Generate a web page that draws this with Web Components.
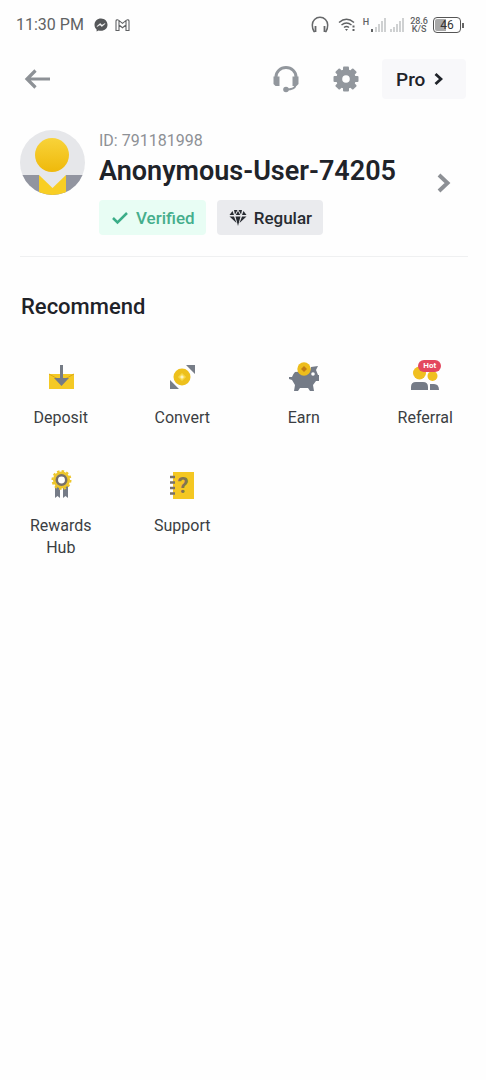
<!DOCTYPE html>
<html lang="en">
<head>
<meta charset="utf-8">
<meta name="viewport" content="width=device-width, initial-scale=1">
<title>Account</title>
<style>
body { margin: 0; min-height: 100vh; background: #fefefe; color: #1f2329; font-family: Roboto, "Liberation Sans", sans-serif; }
</style>
</head>
<body>
<account-page></account-page>
<script>
const define = (name, html) => customElements.define(name, class extends HTMLElement {
  constructor() {
    super();
    const t = document.createElement('template');
    t.innerHTML = html;
    this.attachShadow({ mode: 'open' }).append(t.content.cloneNode(true));
  }
});

define('status-bar', `
<style>
:host { display: flex; align-items: center; height: 50px; padding: 0 22px 0 16px; color: #606264; }
.time { font-size: 16px; line-height: 20px; margin-right: 10px; }
.apps { display: flex; align-items: center; gap: 7px; }
.system { display: flex; align-items: center; margin-left: auto; }
.phones { margin-right: 9px; }
.wifi { margin-right: 7px; }
.net { font-size: 9px; line-height: 12px; align-self: flex-start; font-weight: 500; }
.rate { font-size: 9px; line-height: 8px; text-align: center; font-weight: 500; margin: 0 5px 0 6px; }
.battery { box-sizing: border-box; width: 28px; height: 16px; border: 1px solid #555; border-radius: 4px; padding: 1px; font-size: 12px; line-height: 12px; text-align: center; color: #333; background: linear-gradient(90deg, #a9a9a9 44%, transparent 44%) content-box; }
.tip { width: 2px; height: 5px; background: #666; margin-left: 1px; }
.cell { display: flex; align-items: center; height: 18px; }
svg { display: block; }
</style>
<span class="time">11:30 PM</span>
<span class="apps">
<svg width="14" height="14" viewBox="0 0 14 14"><path d="M7 .5C3.200.5.5 3.200.5 6.700c0 2 .8 3.600 2.100 4.700v2.100l2-1c.8.2 1.500.3 2.400.3 3.800 0 6.500-2.700 6.500-6.100S10.800.5 7 .5z" fill="#555759"/><path d="M3 8.500l3-3 2 1.800 3-1.800-3 3-2-1.700z" fill="#fff" stroke="#fff" stroke-width=".6"/></svg>
<svg width="15" height="13" viewBox="0 0 15 13" fill="none" stroke="#606264" stroke-width="1.100"><path d="M1 11.500V2C1 .8 2.700.5 3.500 1.200l4 3.200 4-3.200C12.300.5 14 .8 14 2v9.500h-3V6L7.500 8.800 4 6v5.500zM4 6V2M11 6V2"/></svg>
</span>
<span class="system">
<svg class="phones" width="18" height="18" viewBox="0 0 18 18" fill="none" stroke="#66686a"><path d="M4 15.500H3C1.800 13.500 1.300 11 1.300 9a7.700 7.700 0 0 1 15.400 0c0 2-.5 4.500-1.700 6.500h-1" stroke-width="1.500"/><path d="M4.500 10v6M13.500 10v6" stroke-width="1.800"/></svg>
<svg class="wifi" width="18" height="14" viewBox="0 0 18 14" fill="none" stroke="#606264" stroke-width="1.500"><path d="M1 4.500Q8.500-2 16 4.500M3.500 7q5-4 10 0M6 9.500q2.500-2 5 0"/><path d="M7 11h3l-1.500 2z" fill="#606264" stroke="none"/><path d="M15.500 7.500v2M15.500 11v2" stroke-width="2"/></svg>
<span class="cell"><span class="net">H</span>
<svg width="18" height="16" viewBox="0 0 18 16" fill="#cfd1d2"><path d="M6 10h2v5H6zM9 7h2v8H9zM12 4h2v11h-2zM15 1h2v14h-2z"/><path d="M2 12h2v3H2z" fill="#606264"/></svg>
<svg width="17" height="16" viewBox="0 0 17 16" fill="#cfd1d2"><path d="M3 12h2v3H3zM6 10h2v5H6zM9 7h2v8H9zM12 4h2v11h-2zM15 1h2v14h-2z"/></svg></span>
<span class="rate">28.6<br>K/S</span>
<span class="battery">46</span><span class="tip"></span>
</span>`);

define('top-bar', `
<style>
:host { display: flex; align-items: center; height: 40px; padding: 9px 20px 0; }
button { border: 0; padding: 0; background: none; font: inherit; color: inherit; display: flex; align-items: center; }
svg { display: block; }
.back { padding-left: 4px; margin-right: auto; }
.help { margin-right: 33px; }
.gear { margin-right: 23px; }
.pro { box-sizing: border-box; height: 40px; width: 84px; padding-left: 14px; gap: 9px; background: #f8f8fa; border-radius: 4px; font-size: 19px; font-weight: 500; }
</style>
<button class="back" aria-label="Back"><svg width="27" height="20" viewBox="0 0 27 20" fill="none" stroke="#8d9196" stroke-width="3.200"><path d="M11.500 1.500L3 10l8.500 8.500M3 10h23"/></svg></button>
<button class="help" aria-label="Customer service"><svg width="28" height="28" viewBox="0 0 28 28"><path d="M4 13v-1a10 9.500 0 0 1 20 0v1" fill="none" stroke="#92979d" stroke-width="3"/><path d="M1.500 11.500h6V21h-4l-2-2zM20.500 11.500h6V19l-2 2h-4z" fill="#92979d"/><path d="M23.500 20.500q-1 4-9 4" fill="none" stroke="#92979d" stroke-width="2"/><circle cx="14" cy="24.500" r="2.800" fill="#92979d"/></svg></button>
<button class="gear" aria-label="Settings"><svg width="26" height="26" viewBox="-13 -13 26 26" fill="#92979d"><rect x="-3" y="-12.500" width="6" height="25" rx="1"/><rect x="-12.500" y="-3" width="25" height="6" rx="1"/><g transform="rotate(45)"><rect x="-3" y="-12.500" width="6" height="25" rx="1"/><rect x="-12.500" y="-3" width="25" height="6" rx="1"/></g><circle r="9.800"/><circle r="3.800" fill="#fefefe"/></svg></button>
<button class="pro">Pro <svg width="9" height="14" viewBox="0 0 9 14" fill="none" stroke="#1f2329" stroke-width="2.800"><path d="M1.500 2L7 7l-5.500 5"/></svg></button>`);

define('status-tag', `
<style>
:host { display: flex; align-items: center; box-sizing: border-box; height: 35px; padding: 0 11px 0 12px; gap: 7px; border-radius: 4px; background: #eaebee; color: #272b31; font: 500 17px/22px Roboto, sans-serif; }
:host([tone="good"]) { background: #e8fdf4; color: #45ae8c; }
</style>
<slot name="icon"></slot><slot></slot>`);

define('profile-card', `
<style>
:host { display: block; margin: 0 18px 0 20px; padding: 31px 0 21px; border-bottom: 1px solid #eff0f1; }
a { display: flex; color: inherit; text-decoration: none; }
.avatar { flex: none; width: 65px; height: 65px; margin-right: 14px; }
.info { flex: 1; min-width: 0; }
.id { font-size: 16px; line-height: 22px; color: #8d9095; }
.name { margin: 0; font-size: 27px; line-height: 38px; font-weight: 600; white-space: nowrap; }
.tags { display: flex; gap: 11px; margin-top: 10px; }
.next { align-self: center; flex: none; margin-right: 16px; }
svg { display: block; }
</style>
<a href="#profile">
<svg class="avatar" viewBox="0 0 65 65"><defs><clipPath id="c"><circle cx="32.500" cy="32.500" r="32.500"/></clipPath><linearGradient id="g" x2="0" y2="1"><stop stop-color="#f8d33a"/><stop offset="1" stop-color="#efb90b"/></linearGradient></defs><g clip-path="url(#c)"><path d="M0 0h65v65H0z" fill="#e6e7ea"/><path d="M0 45h65v20H0z" fill="#9295a0"/><path d="M19 45h27v20H19z" fill="#f8ce24"/><path d="M19 45h27L32.500 58z" fill="#e6e7ea"/></g><circle cx="32" cy="25" r="17" fill="url(#g)"/></svg>
<div class="info">
<div class="id">ID: 791181998</div>
<h1 class="name">Anonymous-User-74205</h1>
<div class="tags">
<status-tag tone="good"><svg slot="icon" width="18" height="14" viewBox="0 0 18 14" fill="none" stroke="#3bad88" stroke-width="2.500"><path d="M2 7l4.500 4.500L16 2"/></svg>Verified</status-tag>
<status-tag><svg slot="icon" width="18" height="16" viewBox="0 0 18 16" fill="#272b31"><path d="M5 0h3.500L6 4.500zM9.500 0H13l-1 4.500zM9 1l2.200 4H6.800zM3.500 1L5 5H.5zM14.500 1l3 4H13zM.5 6.500H5L7.500 13zM6.500 6.500h5L9 16zM13 6.500h4.500L10.500 13z"/></svg>Regular</status-tag>
</div>
</div>
<svg class="next" width="16" height="22" viewBox="0 0 16 22" fill="none" stroke="#8d9095" stroke-width="4"><path d="M3 3l8.500 8L3 19"/></svg>
</a>`);

define('menu-tile', `
<style>
:host { display: block; }
a { display: flex; flex-direction: column; align-items: center; color: #3b3e43; text-decoration: none; font-size: 16px; line-height: 22px; text-align: center; }
.icon { position: relative; width: 32px; height: 32px; margin-bottom: 14px; }
.label { max-width: 80px; }
::slotted(b) { position: absolute; left: 9px; top: -1px; width: 23px; height: 12px; border-radius: 6px; background: #e3475f; color: #fff; font: 700 8px/12px Roboto, sans-serif; }
</style>
<a href="#"><span class="icon"><slot name="icon"></slot><slot name="badge"></slot></span><span class="label"><slot></slot></span></a>`);

define('recommend-section', `
<style>
h2 { margin: 36px 21px 40px; font-size: 22px; line-height: 28px; font-weight: 500; }
.grid { display: grid; grid-template-columns: repeat(4, 1fr); row-gap: 40px; }
svg { display: block; }
</style>
<h2>Recommend</h2>
<nav class="grid" aria-label="Recommend">
<menu-tile><svg slot="icon" width="32" height="32" viewBox="0 0 32 32"><path d="M4 13h25v15H4z" fill="#f4c925"/><path d="M4 13l12.500 7L29 13" fill="none" stroke="#dba817"/><path d="M15 4h3v13h6l-7.500 8L9 17h6z" fill="#757b85"/></svg>Deposit</menu-tile>
<menu-tile><svg slot="icon" width="32" height="32" viewBox="0 0 32 32"><path d="M20 4h9v9zM4 19v9h9z" fill="#777d87"/><circle cx="16" cy="16" r="8.500" fill="#edc01c"/><path d="M16 13l3 3-3 3-3-3z" fill="#fff3bd" stroke="#f7d94c" stroke-width="1.500"/></svg>Convert</menu-tile>
<menu-tile><svg slot="icon" width="32" height="32" viewBox="0 0 32 32"><path d="M7 11l15-1 1-4 7-1-2 4 2 5h1v6h-3l-3 4 1 6h-4l-2-3H12l-2 3H6l1-6-3-5-3-1v-2h3q1-3 3-5z" fill="#747b87"/><circle cx="25" cy="13" r="1.800" fill="#fff"/><circle cx="16" cy="8" r="6.700" fill="#edbd1c"/><path d="M16 5l3 3-3 3-3-3z" fill="#c17d16"/></svg>Earn</menu-tile>
<menu-tile><svg slot="icon" width="32" height="32" viewBox="0 0 32 32"><g fill="#f0bf20"><circle cx="10.500" cy="12" r="6.500"/><circle cx="23.500" cy="15" r="5"/></g><path d="M2 29v-3q0-5 5-5h7q5 0 5 5v3zM21 29v-6h4q5 0 5 6z" fill="#757b87"/></svg><b slot="badge">Hot</b>Referral</menu-tile>
<menu-tile><svg slot="icon" width="32" height="32" viewBox="0 0 32 32"><path d="M10 17h5v12l-2.500-2L10 29zM18 17h5v12l-2.500-2L18 29z" fill="#757b87"/><circle cx="16.500" cy="11" r="9" fill="none" stroke="#edc52a" stroke-width="2" stroke-dasharray="2.500 2.200"/><circle cx="16.500" cy="11" r="8.500" fill="#edc52a"/><circle cx="16.500" cy="11" r="4.700" fill="#fff" stroke="#77706a" stroke-width="2.500"/></svg>Rewards Hub</menu-tile>
<menu-tile><svg slot="icon" width="32" height="32" viewBox="0 0 32 32"><path d="M7 3h21v27H7z" fill="#f4c722"/><path d="M4 8h5M4 13.500h5M4 19h5M4 24.500h5" stroke="#77706a" stroke-width="2.500"/><text x="17" y="24" text-anchor="middle" font-family="Roboto" font-weight="700" font-size="22" fill="#817452">?</text></svg>Support</menu-tile>
</nav>`);

define('account-page', `
<style>:host { display: block; }</style>
<status-bar></status-bar>
<top-bar></top-bar>
<main><profile-card></profile-card><recommend-section></recommend-section></main>`);
</script>
</body>
</html>
